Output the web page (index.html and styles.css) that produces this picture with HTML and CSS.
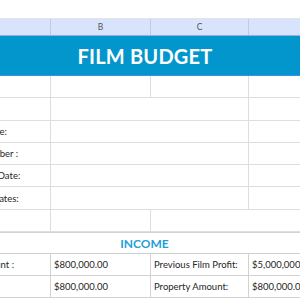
FILE: index.html
```html
<!DOCTYPE html>
<html>
<head>
<meta charset="utf-8">
<link rel="stylesheet" href="styles.css">
</head>
<body>
<div class="sheet">
  <div class="top"></div>
  <div class="row hdr">
    <div class="hc"></div>
    <div class="hc">B</div>
    <div class="hc">C</div>
    <div class="hc"></div>
  </div>
  <div class="title">FILM BUDGET</div>
  <div class="row r22">
    <div class="c"></div><div class="c"></div><div class="c"></div><div class="c"></div>
  </div>
  <div class="row r23">
    <div class="c"></div><div class="c bc"></div><div class="c"></div>
  </div>
  <div class="row r22">
    <div class="c lbl">Title of the Picture:</div><div class="c bc"></div><div class="c"></div>
  </div>
  <div class="row r22">
    <div class="c lbl">Registration Number :</div><div class="c bc"></div><div class="c"></div>
  </div>
  <div class="row r22">
    <div class="c lbl">Production Start Date:</div><div class="c bc"></div><div class="c"></div>
  </div>
  <div class="row r23">
    <div class="c lbl">Principal Shoot Dates:</div><div class="c bc"></div><div class="c"></div>
  </div>
  <div class="row r22">
    <div class="c"></div><div class="c"></div><div class="c cd"></div>
  </div>
  <div class="row r22">
    <div class="c income">INCOME</div>
  </div>
  <div class="row r22 money">
    <div class="c lbl">Investment Amount :</div><div class="c">$800,000.00</div><div class="c">Previous Film Profit:</div><div class="c">$5,000,000.00</div>
  </div>
  <div class="row r22 money">
    <div class="c lbl"></div><div class="c">$800,000.00</div><div class="c">Property Amount:</div><div class="c">$800,000.00</div>
  </div>
</div>
</body>
</html>
```
FILE: styles.css
```css
html, body {
  margin: 0;
  padding: 0;
  background: #ffffff;
  overflow: hidden;
}
body {
  width: 300px;
  height: 300px;
  font-family: Lato, "Liberation Sans", sans-serif;
  color: #262626;
}
.sheet {
  width: 442px;
  margin-left: -76px;
}
.top {
  height: 19px;
  box-sizing: border-box;
  border-bottom: 1px solid #e4e4e4;
  background: #ffffff;
}
.row {
  display: grid;
  grid-template-columns: 127px 100px 98px 117px;
}
.hdr {
  height: 17px;
  box-sizing: border-box;
  background: #d8e4fb;
  border-bottom: 1px solid #93aee0;
}
.hc {
  border-right: 1px solid #c3cbdb;
  display: flex;
  align-items: center;
  justify-content: center;
  font-size: 8.5px;
  color: #555555;
}
.title {
  height: 40px;
  box-sizing: border-box;
  background: #0396cd;
  border-bottom: 1px solid #3f8ee6;
  color: #ffffff;
  font-weight: 700;
  font-size: 20px;
  display: flex;
  align-items: center;
  justify-content: center;
  letter-spacing: 0.2px;
}
.r22 { height: 22px; }
.r23 { height: 23px; }
.c {
  box-sizing: border-box;
  border-right: 1px solid #dedede;
  border-bottom: 1px solid #dedede;
  display: flex;
  align-items: center;
  padding-left: 3px;
  font-size: 9.5px;
  white-space: nowrap;
  overflow: hidden;
}
.bc { grid-column: span 2; }
.cd { grid-column: span 2; }
.income {
  grid-column: 1 / -1;
  justify-content: center;
  padding-left: 0;
  color: #1ea0d8;
  font-weight: 700;
  font-size: 12px;
  border-top: 1px solid #d2d2d2;
  border-bottom: 1px solid #cfcfcf;
}
.money .c {
  border-color: #d2d2d2;
}
```
